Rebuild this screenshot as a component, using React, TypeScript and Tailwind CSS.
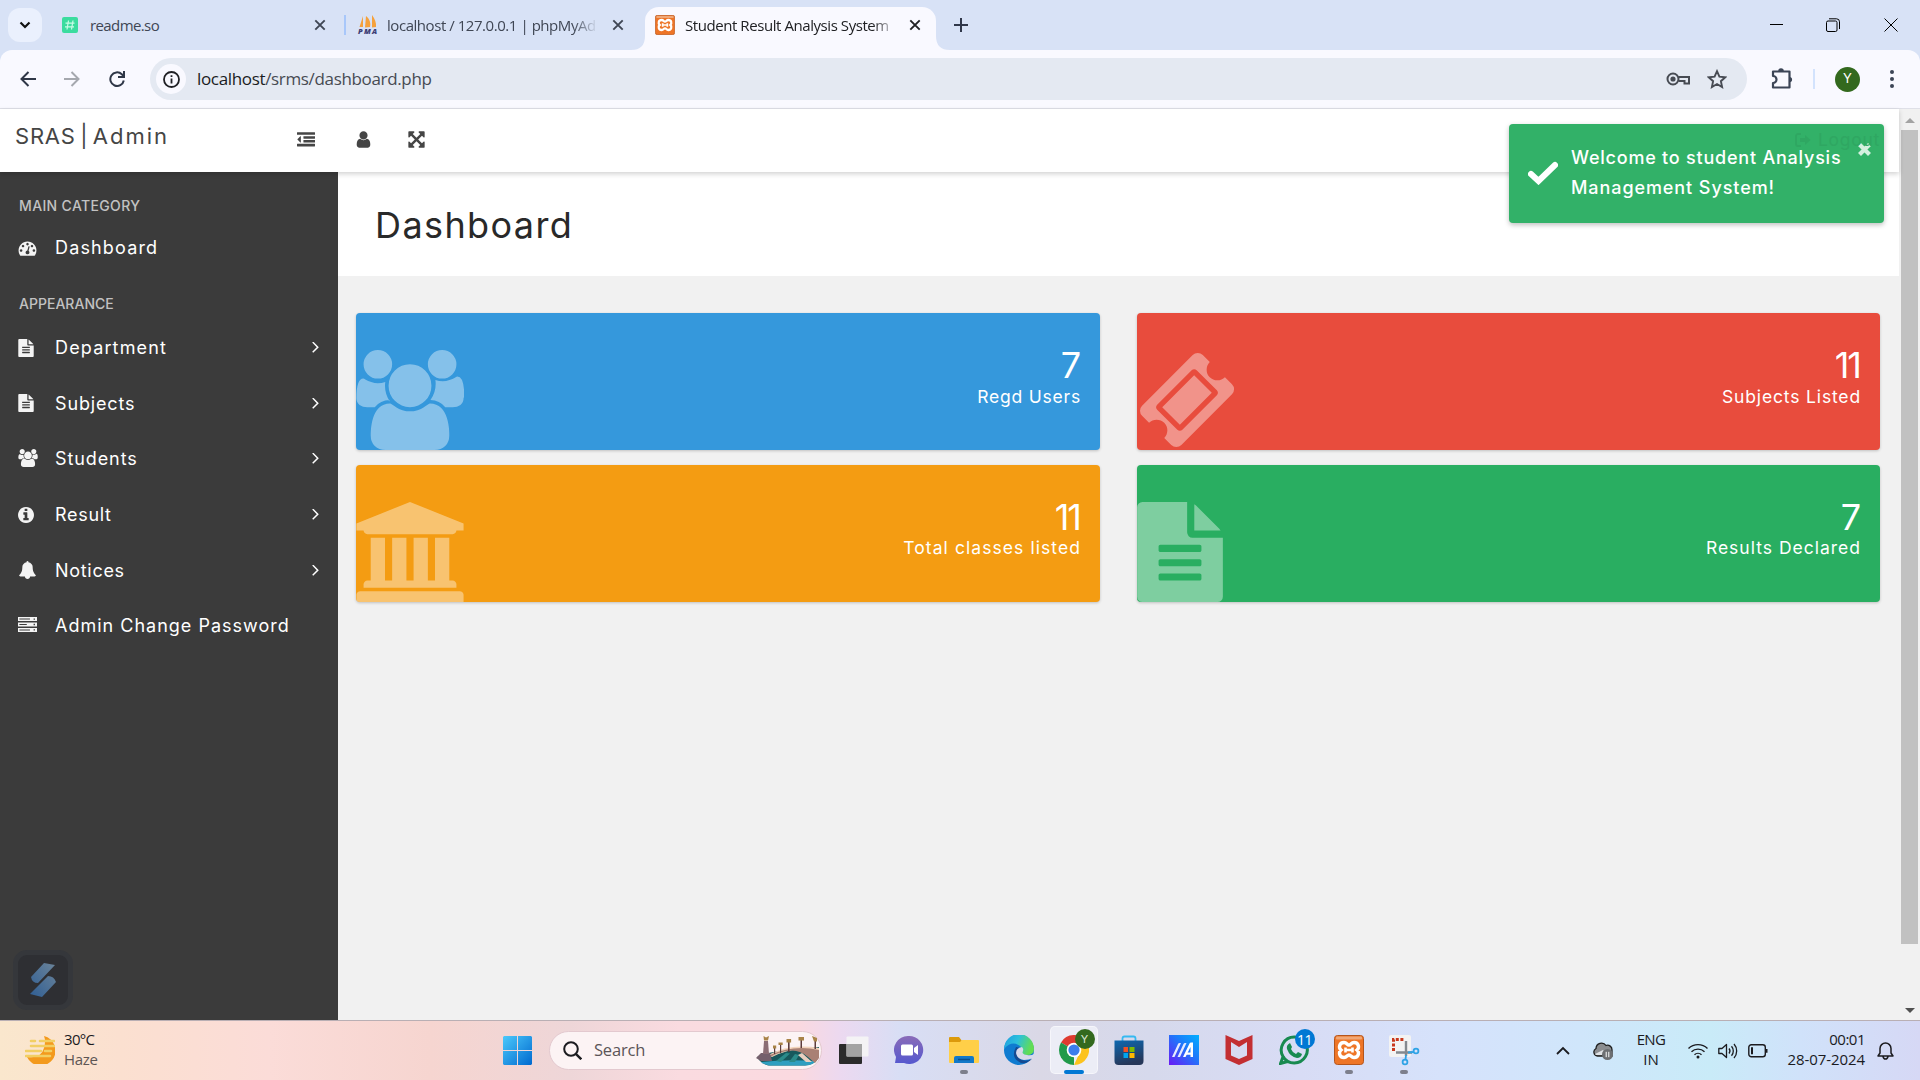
import type { ReactNode } from "react";

type GlyphProps = { d: string; box?: string; className?: string };

function Glyph({ d, box = "0 0 1792 1792", className = "" }: GlyphProps) {
  return (
    <svg viewBox={box} className={`shrink-0 ${className}`} fill="currentColor">
      <path d={d} />
    </svg>
  );
}

const USERS =
  "M593 896q-162 5-265 128h-134q-82 0-138-40.5t-56-118.5q0-353 124-353 6 0 43.5 21t97.5 42.5 119 21.5q67 0 133-23-5 37-5 66 0 159 93 293zm1071 637q0 120-73 189.5t-194 69.5h-874q-121 0-194-69.5t-73-189.5q0-53 3.5-103.5t14-109 26.5-108.5 43-97.5 62-81 85.5-53.5 111.5-20q10 0 43 21.5t73 48 107 48 135 21.5 135-21.5 107-48 73-48 43-21.5q61 0 111.5 20t85.5 53.5 62 81 43 97.5 26.5 108.5 14 109 3.5 103.5zm-1024-1277q0 106-75 181t-181 75-181-75-75-181 75-181 181-75 181 75 75 181zm704 384q0 159-112.5 271.5t-271.5 112.5-271.5-112.5-112.5-271.5 112.5-271.5 271.5-112.5 271.5 112.5 112.5 271.5zm576 225q0 78-56 118.5t-138 40.5h-134q-103-123-265-128 93-134 93-293 0-29-5-66 66 23 133 23 59 0 119-21.5t97.5-42.5 43.5-21q124 0 124 353zm-128-609q0 106-75 181t-181 75-181-75-75-181 75-181 181-75 181 75 75 181z";
const BANK =
  "M960 0l960 384v128h-128q0 26-20.5 45t-48.5 19h-1526q-28 0-48.5-19t-20.5-45h-128v-128zm-704 640h256v768h128v-768h256v768h128v-768h256v768h128v-768h256v768h59q28 0 48.5 19t20.5 45v64h-1664v-64q0-26 20.5-45t48.5-19h59v-768zm1595 960q28 0 48.5 19t20.5 45v128h-1920v-128q0-26 20.5-45t48.5-19h1782z";
const TICKET =
  "M1024 452l316 316-572 572-316-316zm-211 979l618-618q19-19 19-45t-19-45l-362-362q-18-18-45-18t-45 18l-618 618q-19 19-19 45t19 45l362 362q18 18 45 18t45-18zm889-637l-907 908q-37 37-90.5 37t-90.5-37l-126-126q56-56 56-136t-56-136-136-56-136 56l-125-126q-37-37-37-90.5t37-90.5l907-906q37-37 90.5-37t90.5 37l125 125q-56 56-56 136t56 136 136 56 136-56l126 125q37 37 37 90.5t-37 90.5z";
const FILE =
  "M1596 476q14 14 28 36h-472v-472q22 14 36 28zm-476 164h544v1056q0 40-28 68t-68 28h-1344q-40 0-68-28t-28-68v-1600q0-40 28-68t68-28h800v544q0 40 28 68t68 28zm160 736v-64q0-14-9-23t-23-9h-704q-14 0-23 9t-9 23v64q0 14 9 23t23 9h704q14 0 23-9t9-23zm0-256v-64q0-14-9-23t-23-9h-704q-14 0-23 9t-9 23v64q0 14 9 23t23 9h704q14 0 23-9t9-23zm0-256v-64q0-14-9-23t-23-9h-704q-14 0-23 9t-9 23v64q0 14 9 23t23 9h704q14 0 23-9t9-23z";
const OUTDENT =
  "M384 544v576q0 13-9.5 22.5t-22.5 9.5q-14 0-23-9l-288-288q-9-9-9-23t9-23l288-288q9-9 23-9 13 0 22.5 9.5t9.5 22.5zm1408 768v192q0 13-9.5 22.5t-22.5 9.5h-1728q-13 0-22.5-9.5t-9.5-22.5v-192q0-13 9.5-22.5t22.5-9.5h1728q13 0 22.5 9.5t9.5 22.5zm0-384v192q0 13-9.5 22.5t-22.5 9.5h-1088q-13 0-22.5-9.5t-9.5-22.5v-192q0-13 9.5-22.5t22.5-9.5h1088q13 0 22.5 9.5t9.5 22.5zm0-384v192q0 13-9.5 22.5t-22.5 9.5h-1088q-13 0-22.5-9.5t-9.5-22.5v-192q0-13 9.5-22.5t22.5-9.5h1088q13 0 22.5 9.5t9.5 22.5zm0-384v192q0 13-9.5 22.5t-22.5 9.5h-1728q-13 0-22.5-9.5t-9.5-22.5v-192q0-13 9.5-22.5t22.5-9.5h1728q13 0 22.5 9.5t9.5 22.5z";
const USER =
  "M1536 1399q0 109-62.5 187t-150.5 78h-854q-88 0-150.5-78t-62.5-187q0-85 8.5-160.5t31.5-152 58.5-131 94-89 134.5-34.5q131 128 313 128t313-128q76 0 134.5 34.5t94 89 58.5 131 31.5 152 8.5 160.5zm-256-887q0 159-112.5 271.5t-271.5 112.5-271.5-112.5-112.5-271.5 112.5-271.5 271.5-112.5 271.5 112.5 112.5 271.5z";
const EXPAND =
  "M1411 541l-355 355 355 355 144-144q29-31 70-14 39 17 39 59v448q0 26-19 45t-45 19h-448q-42 0-59-40-17-39 14-69l144-144-355-355-355 355 144 144q31 30 14 69-17 40-59 40h-448q-26 0-45-19t-19-45v-448q0-42 40-59 39-17 69 14l144 144 355-355-355-355-144 144q-19 19-45 19-12 0-24-5-40-17-40-59v-448q0-26 19-45t45-19h448q42 0 59 40 17 39-14 69l-144 144 355 355 355-355-144-144q-31-30-14-69 17-40 59-40h448q26 0 45 19t19 45v448q0 42-39 59-13 5-25 5-26 0-45-19z";
const GAUGE =
  "M384 1152q0-53-37.5-90.5t-90.5-37.5-90.5 37.5-37.5 90.5 37.5 90.5 90.5 37.5 90.5-37.5 37.5-90.5zm192-448q0-53-37.5-90.5t-90.5-37.5-90.5 37.5-37.5 90.5 37.5 90.5 90.5 37.5 90.5-37.5 37.5-90.5zm428 481l101-382q6-26-7.5-48.5t-38.5-29.5-48 6.5-30 39.5l-101 382q-60 5-107 43.5t-63 98.5q-20 77 20 146t117 89 146-20 89-117q16-60-6-117t-72-91zm660-33q0-53-37.5-90.5t-90.5-37.5-90.5 37.5-37.5 90.5 37.5 90.5 90.5 37.5 90.5-37.5 37.5-90.5zm-640-640q0-53-37.5-90.5t-90.5-37.5-90.5 37.5-37.5 90.5 37.5 90.5 90.5 37.5 90.5-37.5 37.5-90.5zm448 192q0-53-37.5-90.5t-90.5-37.5-90.5 37.5-37.5 90.5 37.5 90.5 90.5 37.5 90.5-37.5 37.5-90.5zm320 448q0 261-141 483-19 29-54 29h-1402q-35 0-54-29-141-221-141-483 0-182 71-348t191-286 286-191 348-71 348 71 286 191 191 286 71 348z";
const INFO =
  "M1152 1376v-160q0-14-9-23t-23-9h-96v-512q0-14-9-23t-23-9h-320q-14 0-23 9t-9 23v160q0 14 9 23t23 9h96v320h-96q-14 0-23 9t-9 23v160q0 14 9 23t23 9h448q14 0 23-9t9-23zm-128-896v-160q0-14-9-23t-23-9h-192q-14 0-23 9t-9 23v160q0 14 9 23t23 9h192q14 0 23-9t9-23zm640 416q0 209-103 385.5t-279.5 279.5-385.5 103-385.5-103-279.5-279.5-103-385.5 103-385.5 279.5-279.5 385.5-103 385.5 103 279.5 279.5 103 385.5z";
const BELL =
  "M1728 1408q0 52-38 90t-90 38h-448q0 106-75 181t-181 75-181-75-75-181h-448q-52 0-90-38t-38-90q50-42 91-88t85-119.5 74.5-158.5 50-206 19.5-260q0-152 117-282.5t307-158.5q-8-19-8-39 0-40 28-68t68-28 68 28 28 68q0 20-8 39 190 28 307 158.5t117 282.5q0 139 19.5 260t50 206 74.5 158.5 85 119.5 91 88z";
const SERVER =
  "M0 192h1792v384h-1792zM128 320v96h1000v-96zM1472 320v128h128v-128zM0 704h1792v384h-1792zM128 850v96h700v-96zM1472 832v128h128v-128zM0 1216h1792v384h-1792zM128 1362v96h1000v-96zM1472 1344v128h128v-128z";
const ANGLE =
  "M1171 960q0 13-10 23l-466 466q-10 10-23 10t-23-10l-50-50q-10-10-10-23t10-23l393-393-393-393q-10-10-10-23t10-23l50-50q10-10 23-10t23 10l466 466q10 10 10 23z";

const SEGOE = "font-['Open_Sans','Noto_Sans',sans-serif]";
const BRAND = "font-['Inter','Open_Sans',sans-serif]";

function Cross({ className = "" }: { className?: string }) {
  return (
    <svg viewBox="0 0 12 12" className={`h-3 w-3 shrink-0 ${className}`} stroke="currentColor" strokeWidth="1.9">
      <path d="M1.3 1.3l9.4 9.4M10.7 1.3l-9.4 9.4" />
    </svg>
  );
}

function XamppLogo({ className = "" }: { className?: string }) {
  return (
    <svg viewBox="0 0 30 30" className={`shrink-0 ${className}`}>
      <rect x=".5" y=".5" width="29" height="29" rx="3" fill="#ee7527" stroke="#b4551c" />
      <rect x="2" y="1.5" width="26" height="3" rx="1" fill="#f0a877" />
      <path
        d="M10 7.500c3 0 3 2.500 5 2.500s2-2.500 5-2.500c5 0 5.500 5.500 3 7.500c2.500 2 2 7.500-3 7.500c-3 0-3-2.500-5-2.500s-2 2.500-5 2.500c-5 0-5.500-5.500-3-7.500c-2.500-2-2-7.500 3-7.500z"
        fill="none"
        stroke="#fff"
        strokeWidth="3.400"
      />
      <path d="M11.500 12.500v5M18.500 12.500v5M11.500 15h7" stroke="#fff" strokeWidth="2.600" />
    </svg>
  );
}

function TabStrip() {
  return (
    <div className={`flex h-[50px] bg-[#d8e2f6] text-[15px] text-[#3f4654] ${SEGOE}`}>
      <div className="ml-2 mt-2 flex h-[34px] w-[34px] items-center justify-center rounded-xl bg-[#eaf0fd]">
        <svg viewBox="0 0 12 8" className="h-2 w-3" fill="none" stroke="#111" strokeWidth="2.200">
          <path d="M1.500 1.500L6 6l4.500-4.500" />
        </svg>
      </div>
      <div className="flex w-[302px] items-center pl-5">
        <svg viewBox="0 0 16 16" className="h-4 w-4">
          <rect width="16" height="16" rx="2" fill="#3bdc9f" />
          <path d="M6.500 3.500l-1.500 9M11 3.500l-1.500 9M3.500 6.200h9M3 9.800h9" stroke="#c9fbe6" strokeWidth="1.200" />
        </svg>
        <span className="ml-3 w-[224px] tracking-[-0.600px]">readme.so</span>
        <Cross />
      </div>
      <div className="flex w-[287px] items-center">
        <span className="h-5 w-[2px] bg-[#a8c7fa]" />
        <svg viewBox="0 0 20 20" className="ml-3 h-5 w-5 overflow-visible">
          <path d="M5 1v11H1.500zM8 1c4 3 5 8 4 11l-5 .5zM14 0c3 4 4.500 8 4 12l-4 .5z" fill="#f5a13c" />
          <text x="0" y="18.500" fontSize="7.500" fontWeight="800" fontStyle="italic" textLength="19" fontFamily="Open Sans" fill="#3c3d74">PMA</text>
        </svg>
        <span className="ml-[9px] w-[211px] whitespace-nowrap tracking-[-0.450px] [mask-image:linear-gradient(90deg,#000_88%,transparent)]">
          localhost / 127.0.0.1 | phpMyAd
        </span>
        <Cross className="ml-[14px]" />
      </div>
      <svg viewBox="0 0 14 14" className="mt-auto h-[14px] w-[14px]" fill="#f9f9ff">
        <path d="M14 0v14H0Q14 14 14 0z" />
      </svg>
      <div className="mt-[7px] flex h-[43px] w-[291px] items-center rounded-t-[14px] bg-[#f9f9ff] pl-[10px] text-[#202124]">
        <XamppLogo className="mb-[7px] h-5 w-5" />
        <span className="mb-[7px] ml-[10px] w-[213px] whitespace-nowrap tracking-[-0.430px] [mask-image:linear-gradient(90deg,#000_88%,transparent)]">
          Student Result Analysis System
        </span>
        <Cross className="mb-[7px] ml-[11px]" />
      </div>
      <svg viewBox="0 0 14 14" className="mt-auto h-[14px] w-[14px]" fill="#f9f9ff">
        <path d="M0 0v14h14Q0 14 0 0z" />
      </svg>
      <svg viewBox="0 0 14 14" className="ml-1 mt-[18px] h-[14px] w-[14px]" stroke="#30374a" strokeWidth="2">
        <path d="M7 0v14M0 7h14" />
      </svg>
      <div className="ml-auto mr-[22px] flex items-center text-black">
        <svg viewBox="0 0 14 14" className="h-[14px] w-[14px]" stroke="currentColor"><path d="M0 6.500h13" /></svg>
        <svg viewBox="0 0 14 14" className="ml-[42px] h-[14px] w-[14px]" fill="none" stroke="currentColor">
          <rect x=".5" y="3" width="10.500" height="10.500" rx="1.500" />
          <path d="M3 .8h7.500a3 3 0 013 3V11" />
        </svg>
        <svg viewBox="0 0 14 14" className="ml-11 h-[14px] w-[14px]" stroke="currentColor"><path d="M.5.500l13 13M13.500.500l-13 13" /></svg>
      </div>
    </div>
  );
}

function Toolbar() {
  return (
    <div className="h-[59px] bg-[#d8e2f6]">
      <div className={`flex h-[59px] items-center rounded-t-[12px] border-b border-[#dfe0e8] bg-[#f9f9ff] ${SEGOE}`}>
        <svg viewBox="0 0 16 16" className="ml-5 h-4 w-4" fill="none" stroke="#2f3747" strokeWidth="2">
          <path d="M16 8H1.500M8.500 1L1.500 8l7 7" />
        </svg>
        <svg viewBox="0 0 16 16" className="ml-7 h-4 w-4" fill="none" stroke="#a5a8ae" strokeWidth="2">
          <path d="M0 8h14.500M7.500 1l7 7-7 7" />
        </svg>
        <svg viewBox="0 0 16 16" className="ml-[29px] h-4 w-4" fill="none" stroke="#2f3747" strokeWidth="2">
          <path d="M14.800 9.500A6.800 6.800 0 1112.800 3.200L15 5.500M15 0v6H9" />
        </svg>
        <div className="ml-[25px] flex h-[42px] w-[1597px] items-center rounded-full bg-[#e4e9f2] pl-[6px] pr-[20px]">
          <div className="flex h-[30px] w-[30px] items-center justify-center rounded-full bg-[#f9f9ff]">
            <svg viewBox="0 0 17 17" className="h-[17px] w-[17px]" fill="none" stroke="#1f2024" strokeWidth="1.800">
              <circle cx="8.500" cy="8.500" r="7.500" />
              <path d="M8.500 7.500v5M8.500 4.200v1.800" />
            </svg>
          </div>
          <span className="ml-[11px] text-[17px] tracking-[-0.340px] text-[#474b53]">
            <span className="text-[#1a1c22]">localhost</span>/srms/dashboard.php
          </span>
          <svg viewBox="0 0 24 14" className="ml-auto h-[14px] w-6" fill="none" stroke="#474b53" strokeWidth="2">
            <circle cx="7" cy="7" r="5.500" />
            <circle cx="7" cy="7" r="1.600" fill="#474b53" />
            <path d="M12.500 5H23v6.500h-4.500V9h-6" />
          </svg>
          <svg viewBox="0 0 20 20" className="ml-[17px] h-5 w-5" fill="none" stroke="#474b53" strokeWidth="1.900">
            <path d="M10 2.200l2.400 5.400 5.900.6-4.400 4 1.200 5.800-5.100-3-5.100 3 1.200-5.800-4.400-4 5.900-.6z" />
          </svg>
        </div>
        <svg viewBox="0 0 22 22" className="ml-6 h-[22px] w-[22px]" fill="none" stroke="#3c4556" strokeWidth="2.200">
          <path d="M2 3.500H18.500V19.500H2V15a3.300 3.300 0 000-7z" strokeLinejoin="round" />
          <path d="M7.200 3a2.600 2.600 0 015.600 0zM18.500 9a2.600 2.600 0 010 5.200z" fill="#3c4556" stroke="none" />
        </svg>
        <span className="ml-5 h-5 w-[2px] bg-[#d3e3fd]" />
        <span className={`ml-5 flex h-[25px] w-[25px] items-center justify-center rounded-full bg-[#33691e] text-[13px] text-white ${BRAND}`}>Y</span>
        <svg viewBox="0 0 4 20" className="ml-[30px] h-5 w-1" fill="#3c4556">
          <circle cx="2" cy="3" r="2" />
          <circle cx="2" cy="10" r="2" />
          <circle cx="2" cy="17" r="2" />
        </svg>
      </div>
    </div>
  );
}

function NavItem({ icon, label, track, arrow = true }: { icon: ReactNode; label: string; track: string; arrow?: boolean }) {
  return (
    <li className="flex h-[55.700px] items-center pl-[18px] pr-4">
      <span className="flex w-[37px] items-center">{icon}</span>
      <span className={`text-[18px] text-white ${track}`}>{label}</span>
      {arrow && <Glyph d={ANGLE} box="560 490 640 1000" className="ml-auto mr-[3px] h-[11px] w-[7px] text-white" />}
    </li>
  );
}

function Sidebar() {
  const file = <Glyph d={FILE} box="128 0 1536 1792" className="h-[18px] w-[16px]" />;
  return (
    <aside className="flex w-[338px] flex-col bg-[#3b3b3b] pb-[10px] pt-5 text-[#f4f4f4]">
      <h2 className="flex h-[26px] items-center pl-[19px] text-[14px] font-medium tracking-[0.350px] text-[#c2c2c2]">MAIN CATEGORY</h2>
      <ul className="mt-[2px]">
        <NavItem icon={<Glyph d={GAUGE} box="0 100 1792 1600" className="h-[16px] w-[19px]" />} label="Dashboard" track="tracking-[1.150px]" arrow={false} />
      </ul>
      <h2 className="mt-[15px] flex h-[26px] items-center pl-[19px] text-[14px] font-medium tracking-[0.020px] text-[#c2c2c2]">APPEARANCE</h2>
      <ul className="mt-[3px]">
        <NavItem icon={file} label="Department" track="tracking-[1.150px]" />
        <NavItem icon={file} label="Subjects" track="tracking-[0.850px]" />
        <NavItem icon={<Glyph d={USERS} box="0 0 1920 1792" className="-mt-px h-[18px] w-[20px]" />} label="Students" track="tracking-[0.900px]" />
        <NavItem icon={<Glyph d={INFO} box="128 128 1536 1536" className="h-[16px] w-[16px]" />} label="Result" track="tracking-[0.700px]" />
        <NavItem icon={<Glyph d={BELL} className="h-[18px] w-[19px]" />} label="Notices" track="tracking-[0.700px]" />
        <NavItem
          icon={
            <svg viewBox="0 0 1792 1792" className="-mt-[2px] h-[19px] w-[19px]" fill="currentColor">
              <path fillRule="evenodd" d={SERVER} />
            </svg>
          }
          label="Admin Change Password"
          track="tracking-[1px]"
          arrow={false}
        />
      </ul>
      <div className="ml-[13px] mt-auto flex h-[60px] w-[60px] items-center justify-center rounded-[14px] border-[5px] border-[#35373b] bg-[#2e2f33]">
        <svg viewBox="0 0 26 34" className="h-[34px] w-[26px]">
          <defs>
            <linearGradient id="ribbon" x1="0" y1="1" x2="1" y2="0">
              <stop offset="0" stopColor="#2f5e94" />
              <stop offset="1" stopColor="#6c8499" />
            </linearGradient>
          </defs>
          <path d="M14 0l11 2L8 20Q2 20 1 14zM18 13q6 0 8 6L12 34 0 31z" fill="url(#ribbon)" />
        </svg>
      </div>
    </aside>
  );
}

type CardProps = { color: string; value: string; valueTrack?: string; label: string; labelBox: string; icon: ReactNode };

function Card({ color, value, valueTrack = "", label, labelBox, icon }: CardProps) {
  return (
    <div className={`flex h-[137px] items-end justify-between overflow-hidden rounded-[4px] pr-[19px] text-white shadow-[0_1px_3px_rgba(0,0,0,0.200)] ${color}`}>
      <div className="text-white/40">{icon}</div>
      <div className="flex flex-col items-end self-start pt-[34px]">
        <span className={`text-[36px] leading-[36px] ${valueTrack}`}>{value}</span>
        <span className={`text-[17.500px] leading-[22px] ${labelBox}`}>{label}</span>
      </div>
    </div>
  );
}

function Toast() {
  return (
    <div className="absolute left-[1509px] top-[15px] z-20 flex h-[99px] w-[375px] rounded-[4px] bg-[#32b168] text-white shadow-[0_2px_5px_rgba(0,0,0,0.250)]">
      <div className="absolute left-[286px] top-[3px] flex items-center gap-[7px] text-[#2fa762]">
        <svg viewBox="0 0 16 14" className="h-[14px] w-4" fill="none" stroke="currentColor" strokeWidth="1.800">
          <path d="M6 1H3a2 2 0 00-2 2v8a2 2 0 002 2h3" />
          <path d="M5 5h5V2l5.500 5L10 12V9H5z" fill="currentColor" stroke="none" />
        </svg>
        <span className="text-[17.500px] tracking-[0.700px]">Logout</span>
      </div>
      <svg viewBox="0 0 30 24" className="ml-[19px] mt-[37px] h-6 w-[30px]" fill="none" stroke="#fff" strokeWidth="6" strokeLinecap="round" strokeLinejoin="miter">
        <path d="M3 13l7.500 7L27 4" />
      </svg>
      <p className="ml-[13px] mt-[19px] w-[286px] text-[18px] font-medium leading-[30px]">
        <span className="block tracking-[0.780px]">Welcome to student Analysis</span>
        <span className="block tracking-[0.920px]">Management System!</span>
      </p>
      <svg viewBox="0 0 13 13" className="ml-px mt-[19px] h-[13px] w-[13px]" stroke="#d4f0df" strokeWidth="4.200">
        <path d="M1.500 1.500l10 10M11.500 1.500l-10 10" />
      </svg>
    </div>
  );
}

function WebPage() {
  return (
    <div className={`relative flex h-[911px] ${BRAND}`}>
      <div className="flex w-[1899px] flex-col">
        <header className="z-10 flex h-[63px] shrink-0 items-center bg-white pl-[15px] text-[#454545] shadow-[0_2px_5px_rgba(0,0,0,0.180)]">
          <span className="mb-[9px] w-[282px] text-[22px] tracking-[0.800px] [word-spacing:-2.500px]">
            SRAS | <span className="tracking-[2px]">Admin</span>
          </span>
          <Glyph d={OUTDENT} className="-mt-[2px] h-[18px] w-[18px]" />
          <Glyph d={USER} className="-mt-[3px] ml-[39px] h-[19px] w-[19px]" />
          <Glyph d={EXPAND} className="-mt-[2px] ml-[34px] h-[19px] w-[19px]" />
        </header>
        <div className="flex flex-1">
          <Sidebar />
          <main className="flex-1 bg-[#f1f1f1]">
            <div className="flex h-[104px] items-center bg-white pl-[37px] pt-[1px]">
              <h1 className="text-[36px] tracking-[1.400px] text-[#292929]">Dashboard</h1>
            </div>
            <div className="grid grid-cols-[744px_743px] gap-x-[37px] gap-y-[15px] pl-[18px] pt-[37px]">
              <Card color="bg-[#3598dc]" value="7" label="Regd Users" labelBox="mt-[3px] tracking-[0.800px]" icon={<Glyph d={USERS} box="0 0 1920 1792" className="h-[100px] w-[108px]" />} />
              <Card color="bg-[#e84c3d]" value="11" valueTrack="tracking-[-2px] pr-px" label="Subjects Listed" labelBox="mt-[3px] tracking-[0.850px]" icon={<Glyph d={TICKET} box="0 0 1792 1792" className="h-[100px] w-[100px]" />} />
              <Card color="bg-[#f49c12]" value="11" valueTrack="tracking-[-2px] pr-px" label="Total classes listed" labelBox="mt-[2px] tracking-[1.070px]" icon={<Glyph d={BANK} box="0 0 1920 1792" className="h-[100px] w-[108px]" />} />
              <Card color="bg-[#29ae61]" value="7" label="Results Declared" labelBox="mt-[2px] tracking-[1px]" icon={<Glyph d={FILE} box="128 0 1536 1792" className="h-[100px] w-[86px]" />} />
            </div>
          </main>
        </div>
      </div>
      <div className="flex w-[21px] flex-col items-center bg-[#f1f1f1] pb-[7px] pt-[9px]">
        <svg viewBox="0 0 10 5" className="h-[5px] w-[10px]" fill="#a3a3a3"><path d="M0 5l5-5 5 5z" /></svg>
        <div className="mt-[7px] h-[814px] w-[17px] bg-[#c1c1c1]" />
        <svg viewBox="0 0 10 5" className="mt-auto h-[5px] w-[10px]" fill="#505050"><path d="M0 0l5 5 5-5z" /></svg>
      </div>
      <Toast />
    </div>
  );
}

function AppSlot({ children, active, running }: { children: ReactNode; active?: boolean; running?: boolean }) {
  return (
    <div className="flex w-[55px] justify-center">
      <div className={active ? "flex h-12 w-12 flex-col items-center rounded-[5px] border border-white/50 bg-[#ecedf6]" : "flex h-12 w-12 flex-col items-center border border-transparent"}>
        <div className="relative mt-2 flex h-[30px] w-[30px] items-center justify-center">{children}</div>
        {active && <span className="mt-[5px] h-[4px] w-5 shrink-0 rounded-full bg-[#0078d4]" />}
        {running && <span className="mt-[5px] h-[4px] w-2 shrink-0 rounded-full bg-[#7d7f8c]" />}
      </div>
    </div>
  );
}

function SearchArt() {
  return (
    <svg viewBox="0 0 63 31" className="h-[31px] w-[63px]">
      <path d="M1 22q8-4 22-6l40-4v10q-4 8-14 8.500H12Q4 28 1 22z" fill="#17585c" />
      <path d="M5 27q24-3 55-1-4 4.500-11 4.500H14q-6-.5-9-3.500z" fill="#2f9fc0" />
      <path d="M12 20Q34 8 63 13v3Q40 10 16 22z" fill="#f2d3bb" />
      <path d="M14 22Q38 9 52 22l7 6 4-5v-8Q38 9 14 20z" fill="#a98074" />
      <path d="M20 26l10-8 4 .5-9 8.500zM33 27l6-8 4 1-4 7z" fill="#2b8b8a" />
      <path d="M42 20l8 7h6l-10-9z" fill="#e8cfc0" />
      <path d="M0 23l5-5h9l2 8H5z" fill="#75606c" />
      <path d="M8 6h4l1 13H7z" fill="#8b6d74" />
      <path d="M18 13h1.200v6H18zM24 10h1.200v8H24zM32 7h1.600v10H32zM44.500 5h1.500v8h-1.500zM58.500 5H60v9h-1.500z" fill="#5c3c3c" />
      <path d="M7.500 1l2.500 1.500L13 1l-1 4.500H8zM17 10.500h3.200v3H17zM22.500 7.500h4.200v2.500h-4.200zM30.500 4h4.600v3.500h-4.600zM42.500 2h5.500v3.500h-5.500zM56 1l5 2v3.500h-3z" fill="#a88347" />
    </svg>
  );
}

function Taskbar() {
  return (
    <div className={`flex h-[60px] border-t border-[#b9afb4] bg-[linear-gradient(90deg,#fae7cd_0px,#fbe0d0_120px,#fbdcd8_270px,#f6d5d0_430px,#eed6d8_570px,#fadbe0_680px,#fad9e0_800px,#ecd9f0_840px,#d8def5_900px,#dad8e6_1040px,#d6d9ec_1150px,#d8dcf5_1300px,#d6e2fb_1440px,#d0e6fb_1580px,#c9ebf8_1710px,#d0e2fa_1800px,#d6d8f5_1920px)] text-[15px] text-[#1b1b1f] ${SEGOE}`}>
      <div className="flex w-[503px] items-start pl-[25px] pt-[15px]">
        <svg viewBox="0 0 30 28" className="h-7 w-[30px]">
          <path d="M19 0a15 15 0 11-17 21q14 2 17-9 2-7 0-12z" fill="#f39a1d" />
          <path d="M6 5h4M15 5h14M6 10h23M1 15h15M20 15h6M1 20h24" stroke="#f2cf63" strokeWidth="2.600" strokeLinecap="round" />
        </svg>
        <div className="-mt-[7px] ml-[9px] flex flex-col leading-5">
          <span className="tracking-[-0.700px]">30°C</span>
          <span className="tracking-[-0.300px] text-[#5d5654]">Haze</span>
        </div>
      </div>
      <svg viewBox="0 0 29 29" className="mt-[15px] h-[29px] w-[29px]">
        <defs>
          <linearGradient id="win" x1="0" y1="0" x2="1" y2="1">
            <stop offset="0" stopColor="#4cc9fb" />
            <stop offset="1" stopColor="#0069cf" />
          </linearGradient>
        </defs>
        <path d="M1 0h13v14H0V1zM15 0h13l1 1v13H15zM0 15h14v14H1l-1-1zM15 15h14v13l-1 1H15z" fill="url(#win)" />
      </svg>
      <div className="ml-[17px] mt-[10px] flex h-[39px] w-[273px] items-center rounded-full border border-[#e3c9cf] bg-[#fcf3f4] pl-[13px]">
        <svg viewBox="0 0 19 19" className="h-[19px] w-[19px]" fill="none" stroke="#1b1b1f" strokeWidth="2">
          <circle cx="8" cy="8" r="6.800" />
          <path d="M12.800 12.800l5.500 5.500" strokeWidth="2.400" />
        </svg>
        <span className="ml-3 text-[16.500px] tracking-[-0.200px] text-[#5b5558]">Search</span>
        <span className="ml-auto mr-[2px]"><SearchArt /></span>
      </div>
      <div className="ml-1 flex pt-[5px]">
        <AppSlot>
          <svg viewBox="0 0 30 30" className="h-[30px] w-[30px]">
            <rect y="9" width="23" height="20" rx="1" fill="#2b2b2b" />
            <rect x="7.500" y="1.500" width="22" height="20" rx="1" fill="#f5f5f5" fillOpacity=".9" />
            <path d="M7.500 9H23v12.500H7.500z" fill="#a3a3a3" />
          </svg>
        </AppSlot>
        <AppSlot>
          <svg viewBox="0 0 30 30" className="h-[30px] w-[30px]">
            <defs>
              <linearGradient id="chat" x1="0" y1="0" x2="0" y2="1">
                <stop offset="0" stopColor="#8a6bb8" />
                <stop offset="1" stopColor="#5558cf" />
              </linearGradient>
            </defs>
            <path d="M15 1a14 14 0 11-5 27H1l1-6A14 14 0 0115 1z" fill="url(#chat)" />
            <rect x="7" y="9.500" width="12" height="11" rx="1.500" fill="#fff" />
            <path d="M20 13l4-3v10l-4-3z" fill="#fff" />
          </svg>
        </AppSlot>
        <AppSlot running>
          <svg viewBox="0 0 30 30" className="h-[30px] w-[30px]">
            <path d="M0 3q0-1 1-1h9l3 4v4H0z" fill="#dc9a0b" />
            <path d="M0 7h11l2-2h16q1 0 1 1v21q0 1-1 1H1q-1 0-1-1z" fill="#ffcf48" />
            <path d="M5 28v-5q0-2 2-2h16q2 0 2 2v5z" fill="#1279c9" />
            <path d="M9 24.500h12" stroke="#0b4f8c" strokeWidth="1.500" />
          </svg>
        </AppSlot>
        <AppSlot>
          <svg viewBox="0 0 30 30" className="h-[30px] w-[30px]">
            <defs>
              <linearGradient id="edge" x1="0" y1="0" x2="1" y2="0.300">
                <stop offset="0" stopColor="#1e9be0" />
                <stop offset=".5" stopColor="#2cc0dc" />
                <stop offset="1" stopColor="#63dd52" />
              </linearGradient>
            </defs>
            <circle cx="15" cy="15" r="15" fill="#0f7bd0" />
            <path d="M0 14A15 15 0 0130 14q0 6-7 6-6 0-5-3 2-3-2-6Q8 5 0 14z" fill="url(#edge)" />
            <path d="M12 12q-6 11 5 16 6 1 11-4-8 4-13-1-4-5 1-9-1-2-4-2z" fill="#154a91" />
            <path d="M18 12q-6 1-6 6 1 6 8 7 5 0 9-2-1 3-5 5 6-3 6-9-3 2-7 1-6-1-4-4 1-2-1-4z" fill="#d8d9ea" />
          </svg>
        </AppSlot>
        <AppSlot active>
          <svg viewBox="0 0 30 30" className="h-[30px] w-[30px]">
            <path d="M15 15L2.010 7.500A15 15 0 0128 7.500z" fill="#df3b30" />
            <path d="M15 15V30A15 15 0 012.010 7.500z" fill="#219a4b" />
            <path d="M15 15L28 7.500A15 15 0 0115 30l5.500-12z" fill="#fcc31e" />
            <circle cx="15" cy="15" r="7.300" fill="#fff" />
            <circle cx="15" cy="15" r="5.600" fill="#3b7ded" />
          </svg>
          <span className={`absolute -right-[6px] -top-[6px] flex h-5 w-5 items-center justify-center rounded-full bg-[#33691e] text-[11px] text-[#dce8d6] ${BRAND}`}>Y</span>
        </AppSlot>
        <AppSlot>
          <svg viewBox="0 0 30 30" className="h-[30px] w-[30px]">
            <defs>
              <linearGradient id="store" x1="0" y1="0" x2="0.300" y2="1">
                <stop offset="0" stopColor="#0d68b0" />
                <stop offset="1" stopColor="#263759" />
              </linearGradient>
            </defs>
            <path d="M8.500 7V3.500q0-2 2-2h9q2 0 2 2V7" fill="none" stroke="#35b9f1" strokeWidth="1.800" />
            <path d="M.5 5.500h29V26q0 4-4 4h-21q-4 0-4-4z" fill="url(#store)" />
            <path d="M9.500 12H14v5H9.500z" fill="#f25022" />
            <path d="M15.500 12h5v5h-5z" fill="#7fba00" />
            <path d="M9.500 18H14v5H9.500z" fill="#00a4ef" />
            <path d="M15.500 18h5v5h-5z" fill="#ffb900" />
          </svg>
        </AppSlot>
        <AppSlot>
          <svg viewBox="0 0 30 30" className="h-[30px] w-[30px]">
            <defs>
              <linearGradient id="asus" x1="0" y1="1" x2="1" y2="0">
                <stop offset="0" stopColor="#6a18f5" />
                <stop offset=".6" stopColor="#1b7dfb" />
                <stop offset="1" stopColor="#00b0ff" />
              </linearGradient>
            </defs>
            <rect width="30" height="30" fill="url(#asus)" />
            <path d="M3 22L9 9q.5-1 1.500-1h1.500L5.500 22zM8.500 22L14.500 9q.5-1 1.500-1h1.500L11 22z" fill="#e6ebff" />
            <path d="M14 22L20.500 8.500q.5-1 1.500-1h2V22h-2.500V12L16.500 22z" fill="#fff" />
            <path d="M18 17.500h4v2.200h-5z" fill="#fff" />
          </svg>
        </AppSlot>
        <AppSlot>
          <svg viewBox="0 0 30 30" className="h-[30px] w-[30px]">
            <path d="M1.500 0L15 6 28.500 0v24L15 30 1.500 24zM7 7v13.500l8 3.500 8-3.500V7l-8 5z" fill="#c32f32" fillRule="evenodd" />
          </svg>
        </AppSlot>
        <AppSlot>
          <svg viewBox="0 0 30 30" className="h-[30px] w-[30px]">
            <path d="M15.500 2A13 13 0 114 21.500A13 13 0 0115.500 2M4.500 20.500L1.500 28.500l8-2.200" fill="none" stroke="#188a50" strokeWidth="3" />
            <path d="M11 8q-4 2-3 6 3 8 10 9 4 0 5-4l-4-2-2 2q-4-2-5-5l1-2z" fill="#188a50" />
          </svg>
          <span className="absolute -right-[6px] -top-[6px] flex h-5 w-5 items-center justify-center rounded-full bg-[#0078d4] text-[14px] font-medium tracking-[-0.500px] text-white">11</span>
        </AppSlot>
        <AppSlot running>
          <XamppLogo className="h-[30px] w-[30px]" />
        </AppSlot>
        <AppSlot running>
          <svg viewBox="0 0 30 30" className="h-[30px] w-[30px] overflow-visible" fill="none">
            <rect width="22" height="22" rx="2" fill="#f3f3f3" />
            <path d="M4.500 16V4.500H16" stroke="#c9381c" strokeWidth="3" strokeDasharray="3 1.600" />
            <path d="M17 6v15M7 17.500h16" stroke="#84898f" strokeWidth="2.400" />
            <circle cx="27" cy="16" r="2.400" stroke="#2ea3e6" strokeWidth="1.800" />
            <circle cx="16" cy="27" r="2.400" stroke="#2ea3e6" strokeWidth="1.800" />
            <path d="M19 17.500l5.500-.5M17 20l-.5 4.500" stroke="#2ea3e6" strokeWidth="1.800" />
          </svg>
        </AppSlot>
      </div>
      <div className="ml-auto flex items-center pr-[26px]">
        <svg viewBox="0 0 14 9" className="h-[9px] w-[14px]" fill="none" stroke="#1b1b1f" strokeWidth="1.800">
          <path d="M1 8l6-6 6 6" />
        </svg>
        <svg viewBox="0 0 20 18" className="ml-[23px] h-[18px] w-5">
          <path d="M4.500 14A4 4 0 013 6.500 5.500 5.500 0 0113 3.500a4.500 4.500 0 016 4.500v6z" fill="#8b8d90" stroke="#1f1f1f" strokeWidth="1.300" />
          <path d="M2 12l8-4 5 5H3z" fill="#e0e3e6" />
          <circle cx="14.500" cy="12.500" r="5.500" fill="#6d6f72" />
          <path d="M13.200 9.800v5.400M15.800 9.800v5.400" stroke="#fff" />
        </svg>
        <div className="-mt-[3px] ml-[23px] flex w-[30px] flex-col items-center leading-5">
          <span className="tracking-[-0.600px]">ENG</span>
          <span>IN</span>
        </div>
        <svg viewBox="0 0 20 16" className="ml-[22px] h-4 w-5" fill="none" stroke="#1b1b1f" strokeWidth="1.400">
          <path d="M.5 5.500a13.500 13.500 0 0119 0M3.500 8.800a9.300 9.300 0 0113 0M6.500 11.800a5 5 0 017 0" />
          <circle cx="10" cy="14" r="1.500" fill="#1b1b1f" stroke="none" />
        </svg>
        <svg viewBox="0 0 20 18" className="ml-[10px] h-[18px] w-5" fill="none" stroke="#1b1b1f" strokeWidth="1.300">
          <path d="M.8 6.500v5h3.200l4.500 4V2.500L4 6.500z" strokeLinejoin="round" />
          <path d="M11 6.500a4 4 0 010 5M13.500 4.200a7.300 7.300 0 010 9.600M16 2a10.500 10.500 0 010 14" />
        </svg>
        <svg viewBox="0 0 20 14" className="ml-[10px] h-[14px] w-5" fill="none" stroke="#1b1b1f" strokeWidth="1.400">
          <rect x=".8" y=".8" width="16.500" height="12" rx="2.500" />
          <path d="M3 3.300h2v7H3zM18 5h1.500v3.800H18z" fill="#1b1b1f" stroke="none" />
        </svg>
        <div className="-mt-[3px] ml-[20px] flex w-[77px] flex-col items-end whitespace-nowrap leading-5">
          <span className="tracking-[-0.500px]">00:01</span>
          <span className="tracking-[-0.080px]">28-07-2024</span>
        </div>
        <svg viewBox="0 0 17 19" className="ml-[12px] h-[19px] w-[17px]" fill="none" stroke="#1b1b1f" strokeWidth="1.500" strokeLinejoin="round">
          <path d="M3 12V7.500a5.500 5.500 0 0111 0V12l2 3H1zM6 15.500q.5 2.500 2.500 2.500t2.500-2.500" />
        </svg>
      </div>
    </div>
  );
}

export default function App() {
  return (
    <div className="h-[1080px] w-[1920px] overflow-hidden bg-white">
      <TabStrip />
      <Toolbar />
      <WebPage />
      <Taskbar />
    </div>
  );
}
